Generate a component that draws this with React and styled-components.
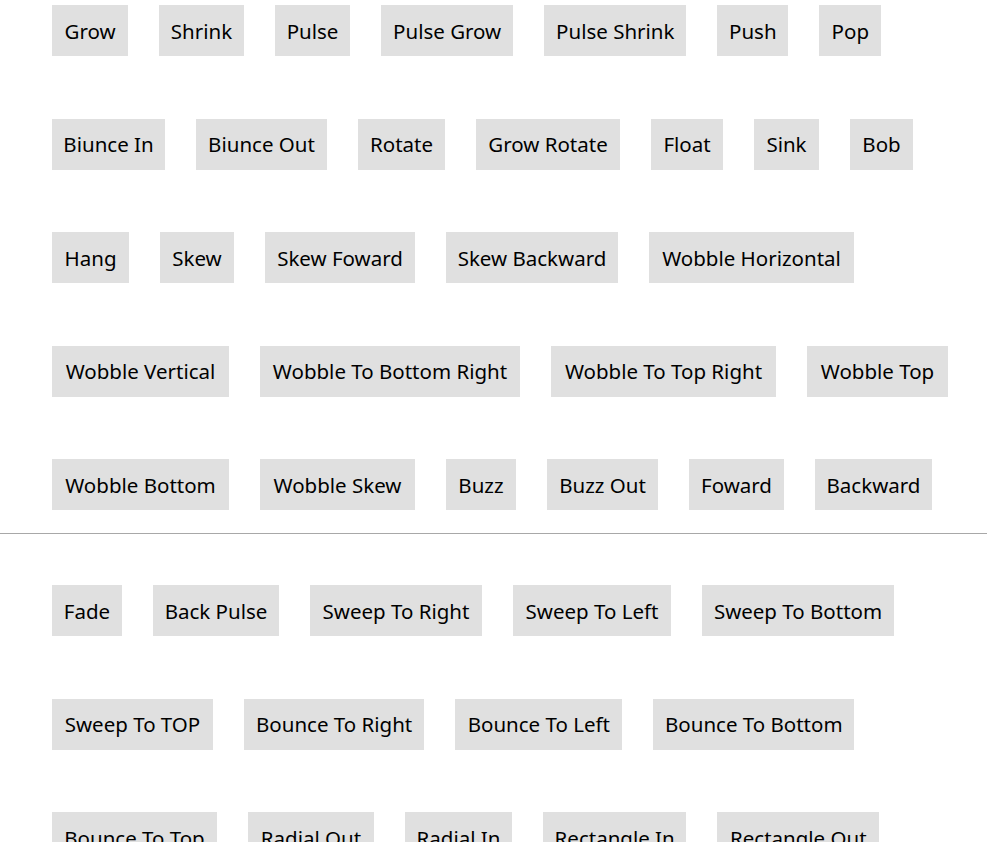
import React from "react";
import styled, { createGlobalStyle } from "styled-components";

const groups = [
    [
        ["Grow", 76], ["Shrink", 85], ["Pulse", 75], ["Pulse Grow", 132.3], ["Pulse Shrink", 142], ["Push", 71], ["Pop", 62],
        ["Biunce In", 113], ["Biunce Out", 131], ["Rotate", 87], ["Grow Rotate", 144], ["Float", 72], ["Sink", 65], ["Bob", 63],
        ["Hang", 77], ["Skew", 74], ["Skew Foward", 150], ["Skew Backward", 172], ["Wobble Horizontal", 205],
        ["Wobble Vertical", 177], ["Wobble To Bottom Right", 260], ["Wobble To Top Right", 225], ["Wobble Top", 141],
        ["Wobble Bottom", 177], ["Wobble Skew", 155], ["Buzz", 70], ["Buzz Out", 111], ["Foward", 95], ["Backward", 117],
    ],
    [
        ["Fade", 70], ["Back Pulse", 126], ["Sweep To Right", 172], ["Sweep To Left", 158], ["Sweep To Bottom", 192],
        ["Sweep To TOP", 161], ["Bounce To Right", 180.3], ["Bounce To Left", 167], ["Bounce To Bottom", 201],
        ["Bounce To Top", 165], ["Radial Out", 126], ["Radial In", 107], ["Rectangle In", 143.3], ["Rectangle Out", 162],
    ],
];

const GlobalStyle = createGlobalStyle`
    body {
        margin: 0;
        background: white;
        font-family: "Noto Sans", "Open Sans", sans-serif;
    }
`;

function App() {
    return (
        <Page>
            <GlobalStyle />
            <Section $top={5} $bottom={23}>
                {groups[0].map(([label, w]) => (
                    <Button key={label} $w={w}>{label}</Button>
                ))}
            </Section>
            <Divider />
            <Section $top={51} $bottom={40}>
                {groups[1].map(([label, w]) => (
                    <Button key={label} $w={w}>{label}</Button>
                ))}
            </Section>
        </Page>
    );
}

const Page = styled.div`
    width: 987px;
`;

const Section = styled.div`
    display: flex;
    flex-wrap: wrap;
    column-gap: 31px;
    row-gap: 62.5px;
    padding: ${({ $top }) => $top}px 0 ${({ $bottom }) => $bottom}px 52px;
`;

const Button = styled.div`
    width: ${({ $w }) => $w}px;
    height: 51px;
    display: flex;
    align-items: center;
    justify-content: center;
    background-color: #e0e0e0;
    color: #000;
    font-size: 20.5px;
    white-space: nowrap;
    cursor: pointer;
`;

const Divider = styled.div`
    height: 1px;
    background-color: #a8a8a8;
`;

export default App;
